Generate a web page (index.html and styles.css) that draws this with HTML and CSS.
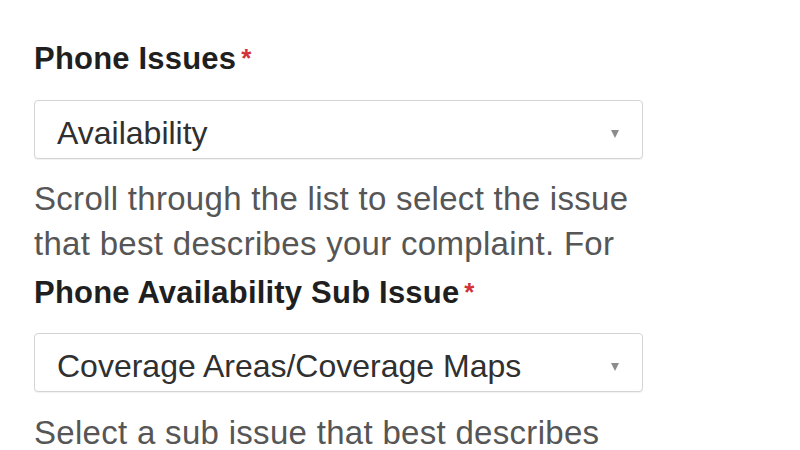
FILE: index.html
```html
<!DOCTYPE html>
<html lang="en">
<head>
<meta charset="utf-8">
<title>Phone Issues</title>
<link rel="stylesheet" href="styles.css">
</head>
<body>
<form class="form">
  <div class="field">
    <div class="label"><span class="label-text">Phone Issues</span><span class="req">*</span></div>
    <div class="select"><span class="value">Availability</span><span class="arrow"></span></div>
    <p class="help">Scroll through the list to select the issue that best describes your complaint. For example, if your phone is not available in your area, select Availability.</p>
  </div>
  <div class="field field-sub">
    <div class="label"><span class="label-text">Phone Availability Sub Issue</span><span class="req">*</span></div>
    <div class="select"><span class="value">Coverage Areas/Coverage Maps</span><span class="arrow"></span></div>
    <p class="help">Select a sub issue that best describes your complaint.</p>
  </div>
</form>
</body>
</html>
```
FILE: styles.css
```css
html, body {
  margin: 0;
  padding: 0;
  background: #ffffff;
}

body {
  font-family: "Liberation Sans", Arial, Helvetica, sans-serif;
  color: #222222;
}

.form {
  padding: 39px 0 0 34px;
  width: 609px;
}

.field {
  display: flex;
  flex-direction: column;
}

.label {
  display: flex;
  align-items: flex-start;
  height: 40px;
}

.label-text {
  font-size: 31px;
  line-height: 40px;
  font-weight: 700;
  color: #1f1f1f;
  letter-spacing: 0.2px;
}

.req {
  color: #d3313a;
  font-size: 26px;
  font-weight: 700;
  line-height: 26px;
  margin: 6px 0 0 5px;
}

.select {
  box-sizing: border-box;
  height: 59px;
  margin-top: 21px;
  border: 1px solid #d4d4d4;
  border-radius: 4px;
  background: #ffffff;
  box-shadow: 0 1px 1px rgba(0, 0, 0, 0.06);
  display: flex;
  align-items: center;
  padding: 8px 23px 0 22px;
}

.field-sub .select {
  margin-top: 20px;
}

.value {
  font-size: 32px;
  color: #303030;
}

.arrow {
  margin-left: auto;
  width: 0;
  height: 0;
  border-left: 4.5px solid transparent;
  border-right: 4.5px solid transparent;
  border-top: 8px solid #8c8c8c;
}

.help {
  margin: 17px 0 7px 0;
  font-size: 33px;
  line-height: 45px;
  letter-spacing: 0.3px;
  color: #565656;
  max-height: 90px;
  overflow: hidden;
}

.field-sub .help {
  margin-top: 18px;
}
```
